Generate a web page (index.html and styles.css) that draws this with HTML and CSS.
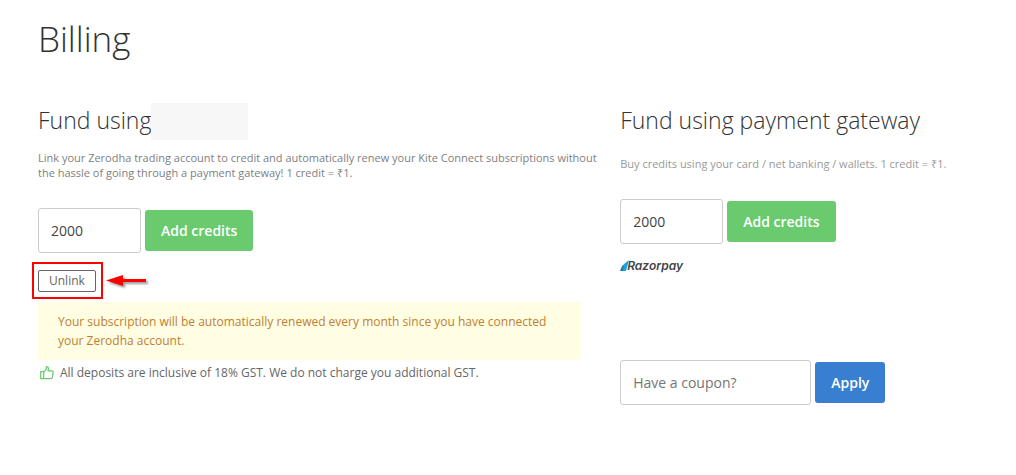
FILE: index.html
```html
<!DOCTYPE html>
<html lang="en">
<head>
<meta charset="utf-8">
<title>Billing</title>
<meta name="viewport" content="width=device-width, initial-scale=1">
<link rel="stylesheet" href="styles.css">
</head>
<body>
<main class="page">
  <h1 class="page-title">Billing</h1>
  <div class="columns">
    <section class="account">
      <h2 class="section-title">Fund using<span class="redacted"></span></h2>
      <p class="hint hint-dark">Link your Zerodha trading account to credit and automatically renew your Kite Connect subscriptions without the hassle of going through a payment gateway! 1 credit = ₹1.</p>
      <form class="form-row">
        <input class="field amount" type="text" value="2000" aria-label="Credits from account">
        <button class="button add" type="button">Add credits</button>
      </form>
      <div class="unlink-row">
        <div class="highlight"><button class="unlink" type="button">Unlink</button></div>
        <svg class="arrow" width="50" height="20" viewBox="0 0 50 20" aria-hidden="true">
          <path class="arrow-shape" d="M3 9.5 20 4v4h23v3H20v4z"/>
        </svg>
      </div>
      <p class="notice">Your subscription will be automatically renewed every month since you have connected your Zerodha account.</p>
      <p class="deposit">
        <svg class="thumb" width="14" height="14" viewBox="0 0 14 14" aria-hidden="true">
          <path d="M.7 5.7h3v7h-3zM3.7 6.1 6.3 3V1.2Q6.5.6 7.1.7 8.6 1 8.4 3L7.9 4.8h4.2q1.2.2 1.1 1.3l-.9 5.3q-.2 1.2-1.4 1.3H3.7"/>
        </svg>
        All deposits are inclusive of 18% GST. We do not charge you additional GST.
      </p>
    </section>
    <section class="gateway">
      <h2 class="section-title">Fund using payment gateway</h2>
      <p class="hint">Buy credits using your card / net banking / wallets. 1 credit = ₹1.</p>
      <form class="form-row">
        <input class="field amount" type="text" value="2000" aria-label="Credits from gateway">
        <button class="button add" type="button">Add credits</button>
      </form>
      <div class="razorpay">
        <svg class="razorpay-mark" width="10" height="12" viewBox="0 0 10 12" aria-hidden="true">
          <path fill="#1d7fb0" d="M0 11 2 6 6 3 4 11z"/>
          <path fill="#19a4dc" d="M3 11 4 4 9 0 6 11z"/>
        </svg>
        <span class="razorpay-name">Razorpay</span>
      </div>
      <form class="form-row">
        <input class="field coupon" type="text" placeholder="Have a coupon?" aria-label="Coupon">
        <button class="button apply" type="button">Apply</button>
      </form>
    </section>
  </div>
</main>
</body>
</html>
```
FILE: styles.css
```css
* {
  box-sizing: border-box;
}

body {
  margin: 0;
  background: #fff;
  color: #666;
  font-family: "Open Sans", "Noto Sans", sans-serif;
}

.page {
  padding: 15px 39px 40px 38px;
}

.page-title {
  margin: 0 0 40px;
  color: #333;
  font-size: 35px;
  font-weight: 300;
  line-height: 48px;
}

.columns {
  display: grid;
  grid-template-columns: 1fr 38%;
  column-gap: 39px;
}

.section-title {
  display: flex;
  align-items: flex-start;
  height: 37px;
  margin: 0;
  color: #333;
  font-size: 23px;
  font-weight: 300;
  line-height: 34px;
  white-space: nowrap;
}

.redacted {
  width: 97px;
  height: 37px;
  background: #f7f7f7;
}

.hint {
  margin: 16px 0 27px;
  color: #999;
  font-size: 11px;
  line-height: 16px;
}

.hint-dark {
  margin: 10px -20px 28px 0;
  color: #808080;
  line-height: 15px;
}

.form-row {
  display: flex;
  align-items: center;
  gap: 4px;
}

.field {
  height: 45px;
  padding: 0 12px;
  border: 1px solid #ccc;
  border-radius: 3px;
  background: #fff;
  color: #444;
  font-family: inherit;
  font-size: 14px;
}

.field::placeholder {
  color: #757575;
  opacity: 1;
}

.amount {
  width: 103px;
}

.coupon {
  width: 191px;
}

.button {
  height: 41px;
  padding: 0 16px;
  border: 0;
  border-radius: 3px;
  color: #fff;
  font-family: inherit;
  font-size: 14px;
  font-weight: 600;
}

.add {
  background: #69ca6e;
}

.apply {
  background: #387ed1;
}

.unlink-row {
  display: flex;
  align-items: center;
  margin: 9px 0 3px -6px;
}

.highlight {
  display: flex;
  padding: 6px 5px 5px 4px;
  border: 2px solid #f00;
}

.unlink {
  height: 22px;
  padding: 0 10px;
  border: 1px solid #666;
  border-radius: 2px;
  background: #fff;
  color: #666;
  font-family: inherit;
  font-size: 12px;
  line-height: 18px;
}

.arrow-shape {
  fill: #f00;
  filter: drop-shadow(2px 2px 1px #999);
}

.notice {
  margin: 0 0 3px;
  padding: 10px 20px;
  border-radius: 3px;
  background: #fffde2;
  color: #c08033;
  font-size: 12px;
  line-height: 19px;
}

.deposit {
  display: flex;
  align-items: center;
  gap: 6px;
  margin: 0;
  padding-left: 2px;
  font-size: 12px;
  line-height: 20px;
}

.thumb {
  fill: none;
  stroke: #69ca6e;
  stroke-width: 1.2;
  stroke-linejoin: round;
}

.razorpay {
  display: flex;
  align-items: center;
  height: 16px;
  margin: 14px 0 86px;
}

.razorpay-name {
  margin-left: -3px;
  color: #444;
  font-family: Inter, sans-serif;
  font-size: 12px;
  font-style: italic;
  font-weight: 600;
  line-height: 16px;
}
```
